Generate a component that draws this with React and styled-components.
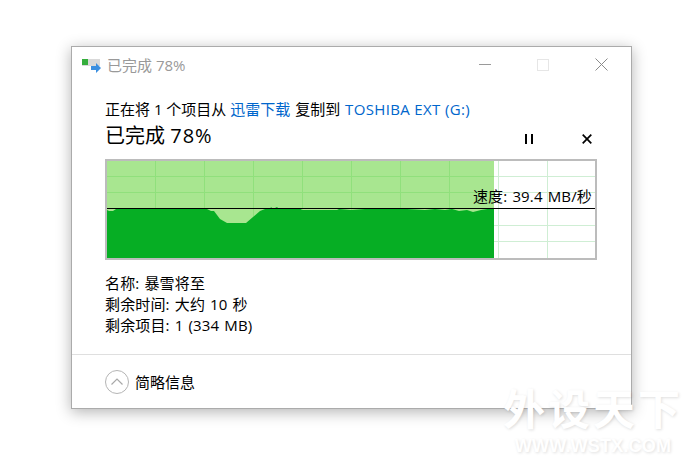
import React from 'react';
import styled, { createGlobalStyle } from 'styled-components';

const FONT = `"Open Sans", "Noto Sans CJK SC", sans-serif`;

const GlobalStyle = createGlobalStyle`
  html, body {
    margin: 0;
    padding: 0;
    background: #fff;
    font-family: ${FONT};
    overflow: hidden;
  }
`;

const Page = styled.div`
  position: relative;
  width: 700px;
  height: 469px;
  padding: 46px 0 0 71px;
  box-sizing: border-box;
  background: #fff;
  overflow: hidden;
`;

const Watermark = styled.div`
  position: absolute;
  left: 500px;
  top: 386px;
  width: 186px;
  color: #fff;
  text-align: center;
  text-shadow: 1px 1px 3px rgba(0, 0, 0, 0.13);
  font-family: "Liberation Sans", "Noto Sans CJK SC", sans-serif;
`;

const WatermarkTitle = styled.div`
  font-size: 42px;
  line-height: 50px;
  height: 50px;
  font-weight: 700;
  letter-spacing: 3px;
  white-space: nowrap;
`;

const WatermarkUrl = styled.div`
  font-size: 18px;
  line-height: 20px;
  font-weight: 700;
  letter-spacing: 0.2px;
  white-space: nowrap;
`;

const Window = styled.div`
  position: relative;
  width: 561px;
  height: 363px;
  box-sizing: border-box;
  background: #fff;
  border: 1px solid #ababab;
  box-shadow: 0 3px 14px rgba(0, 0, 0, 0.3);
  display: flex;
  flex-direction: column;
`;

const TitleBar = styled.div`
  height: 35px;
  display: flex;
  align-items: center;
  padding: 0 1px 0 10px;
`;

const TitleText = styled.span`
  margin-left: 5px;
  flex: 1;
  font-size: 15px;
  color: #999;
`;

const WinButton = styled.div`
  width: 58px;
  height: 35px;
  display: flex;
  align-items: center;
  justify-content: center;
  color: ${p => p.$color};
`;

const Content = styled.div`
  padding: 17px 33px 0 33px;
  flex: 1;
`;

const CopyLine = styled.div`
  font-size: 15px;
  line-height: 20px;
  color: #000;
  white-space: pre;
`;

const Link = styled.span`
  color: #0066cc;
  margin-right: 1px;
`;

const LatinLink = styled(Link)`
  margin-left: 1px;
  letter-spacing: 0.35px;
`;

const StatusRow = styled.div`
  display: flex;
  align-items: center;
  height: 31px;
`;

const StatusText = styled.div`
  flex: 1;
  font-size: 20px;
  color: #000;
`;

const Percent = styled.span`
  letter-spacing: 1px;
`;

const ActionGroup = styled.div`
  display: flex;
  gap: 36px;
  margin-top: 8px;
`;

const ActionButton = styled.div`
  width: 22px;
  height: 28px;
  display: flex;
  align-items: center;
  justify-content: center;
`;

const Chart = styled.div`
  position: relative;
  width: 492px;
  height: 101px;
  margin-top: 9px;
  box-sizing: border-box;
  border: 2px solid #bcbcbc;
`;

const Speed = styled.div`
  position: absolute;
  right: 3px;
  top: 25px;
  font-size: 15px;
  line-height: 20px;
  word-spacing: 1px;
  letter-spacing: 0.15px;
  color: #000;
`;

const Details = styled.div`
  margin-top: 13px;
`;

const DetailRow = styled.div`
  font-size: 15px;
  line-height: 21px;
  word-spacing: 1px;
  letter-spacing: 0.15px;
  color: #000;
`;

const Footer = styled.div`
  height: 53px;
  border-top: 1px solid #dfdfdf;
  display: flex;
  align-items: center;
  padding-left: 33px;
  gap: 6px;
`;

const FooterLabel = styled.span`
  font-size: 15px;
  color: #000;
`;

// wave top edge, chart coordinates
const WAVE = 'M0 49 L2 50 L6 50 L9 48 L100 48 L104 50 L107 50 L113 58 L120 62 L125 62 L139 62 L146 56 L153 50 L158 48 L163 48 L164 46 L166 48 L170 46 L172 48 L194 48 L195 49 L230 49 L232 48 L244 49 L258 48 L262 47 L270 48 L300 48 L318 49 L328 48 L338 49 L345 48 L352 50 L360 49 L366 51 L374 49 L387 47 L387 97 L0 97 Z';

const vLines = [49, 98, 147, 196, 245, 294, 343, 392, 441];
const hLines = [16, 32, 65, 81];
const GREEN_END = 387;

const GraphSvg = () => (
  <svg width="488" height="97" viewBox="0 0 488 97" style={{ display: 'block' }}>
    {vLines.map(x => (
      <line key={x} x1={x - .5} x2={x - .5} y1="0" y2="97" stroke="#cfeed4" />
    ))}
    {hLines.map(y => (
      <line key={y} x1="0" x2="488" y1={y - .5} y2={y - .5} stroke="#cfeed4" />
    ))}
    <rect x="0" y="0" width={GREEN_END} height="97" fill="#a8e690" />
    {vLines.filter(x => x < GREEN_END).map(x => (
      <line key={x} x1={x - .5} x2={x - .5} y1="0" y2="97" stroke="#90e07c" />
    ))}
    {hLines.map(y => (
      <line key={y} x1="0" x2={GREEN_END} y1={y - .5} y2={y - .5} stroke="#90e07c" />
    ))}
    <path d={WAVE} fill="#06ae24" />
    <line x1="0" x2="490" y1="47.5" y2="47.5" stroke="#000" />
  </svg>
);

const CopyIcon = () => (
  <svg width="20" height="18" viewBox="0 0 20 18">
    <rect x="0" y="3" width="18" height="7" fill="#d9d9d9" />
    <rect x="0" y="3" width="6" height="6" fill="#35ae3c" />
    <path d="M9 10h5V7l5 5-5 5v-3H9z" fill="#3b8fe0" />
  </svg>
);

const App = () => (
  <Page>
    <GlobalStyle />
    <Window>
      <TitleBar>
        <CopyIcon />
        <TitleText>已完成 78%</TitleText>
        <WinButton $color="#9a9a9a">
          <svg width="12" height="12"><line x1="0" x2="12" y1="5.5" y2="5.5" stroke="currentColor" /></svg>
        </WinButton>
        <WinButton $color="#e6e6e6">
          <svg width="12" height="12"><rect x=".5" y=".5" width="11" height="11" fill="none" stroke="currentColor" /></svg>
        </WinButton>
        <WinButton $color="#8a8a8a">
          <svg width="13" height="13"><path d="M.5.5l12 12M12.5.5l-12 12" stroke="currentColor" fill="none" /></svg>
        </WinButton>
      </TitleBar>
      <Content>
        <CopyLine>正在将 1 个项目从 <Link>迅雷下载</Link> 复制到 <LatinLink>TOSHIBA EXT (G:)</LatinLink></CopyLine>
        <StatusRow>
          <StatusText>已完成 <Percent>78%</Percent></StatusText>
          <ActionGroup>
            <ActionButton>
              <svg width="10" height="10"><path d="M1 0h2v10H1zM7 0h2v10H7z" fill="#000" /></svg>
            </ActionButton>
            <ActionButton>
              <svg width="10" height="10"><path d="M.7.7l8.6 8.6M9.3.7L.7 9.3" stroke="#000" strokeWidth="1.7" fill="none" /></svg>
            </ActionButton>
          </ActionGroup>
        </StatusRow>
        <Chart>
          <GraphSvg />
          <Speed>速度: 39.4 MB/秒</Speed>
        </Chart>
        <Details>
          <DetailRow>名称: 暴雪将至</DetailRow>
          <DetailRow>剩余时间: 大约 10 秒</DetailRow>
          <DetailRow>剩余项目: 1 (334 MB)</DetailRow>
        </Details>
      </Content>
      <Footer>
        <svg width="24" height="24" viewBox="0 0 24 24">
          <circle cx="12" cy="12" r="11.5" fill="none" stroke="#b4b4b4" />
          <path d="M6.5 14.5L12 9l5.5 5.5" fill="none" stroke="#a8a8a8" strokeWidth="1.2" />
        </svg>
        <FooterLabel>简略信息</FooterLabel>
      </Footer>
    </Window>
    <Watermark>
      <WatermarkTitle>外设天下</WatermarkTitle>
      <WatermarkUrl>WWW.WSTX.COM</WatermarkUrl>
    </Watermark>
  </Page>
);

export default App;
